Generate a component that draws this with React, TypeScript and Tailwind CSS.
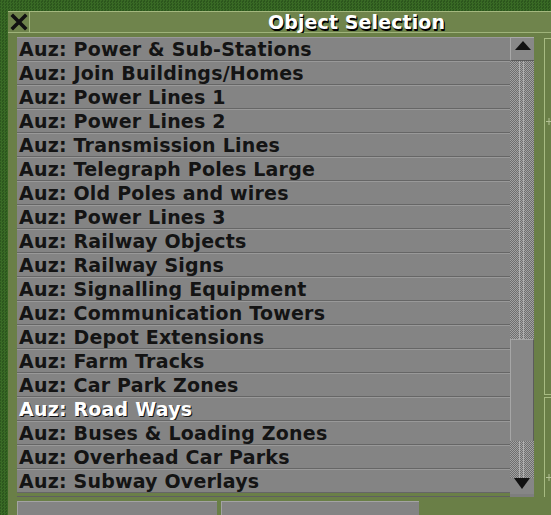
import React from 'react';

const ITEMS = [
  'Power & Sub-Stations',
  'Join Buildings/Homes',
  'Power Lines 1',
  'Power Lines 2',
  'Transmission Lines',
  'Telegraph Poles Large',
  'Old Poles and wires',
  'Power Lines 3',
  'Railway Objects',
  'Railway Signs',
  'Signalling Equipment',
  'Communication Towers',
  'Depot Extensions',
  'Farm Tracks',
  'Car Park Zones',
  'Road Ways',
  'Buses & Loading Zones',
  'Overhead Car Parks',
  'Subway Overlays',
];
const SELECTED = 'Road Ways';

const checker =
  'bg-[image:repeating-conic-gradient(#a2a2a2_0_25%,#6e6e6e_0_50%)] bg-[length:2px_2px]';

export default function App() {
  return (
    <div className="relative w-[551px] h-[515px] overflow-hidden bg-[#2c561d]">
      {/* grass specks */}
      <div className="absolute inset-0 bg-[image:repeating-conic-gradient(#3f7229_0_25%,transparent_0_50%)] bg-[length:3px_3px] opacity-70" />

      {/* the window, placed on the game canvas */}
      <div className="absolute left-[8px] top-[11px] w-[660px] h-[520px] flex flex-col font-['DejaVu_Sans',sans-serif]">
        {/* title bar */}
        <div className="flex h-[23px] bg-[#6f844c] border-t border-[#a4b87f] border-b border-b-[#9fb37a]">
          <div className="w-[22px] h-full flex items-center justify-center border-r border-[#a4b87f]">
            <svg width="18" height="18" viewBox="0 0 18 18">
              <path d="M3 3 L15 15 M15 3 L3 15" stroke="#111" strokeWidth="3.6" strokeLinecap="square" />
            </svg>
          </div>
          <div className="flex-1 pl-[238px] flex items-center">
            <span className="text-white font-bold text-[19px] leading-none tracking-[0.1px] [text-shadow:1px_1px_0_#000,1px_2px_0_#000]">
              Object Selection
            </span>
          </div>
        </div>

        {/* body */}
        <div className="flex-1 bg-[#6a7f47] pl-[9px] pt-[4px] flex flex-col">
          <div className="flex">
            {/* list */}
            <div className="flex">
              <div className="w-[493px] flex flex-col border-b border-[#5f5f5f]">
                {ITEMS.map((it) => {
                  const sel = it === SELECTED;
                  return (
                    <div
                      key={it}
                      className="h-[24px] bg-[#848484] border-t border-[#999999] border-b border-b-[#666666] flex items-center pl-[2px] overflow-hidden"
                    >
                      <span
                        className={`font-bold text-[19px] leading-none tracking-[0.2px] whitespace-nowrap ${
                          sel ? 'text-white [text-shadow:1px_1px_0_#111]' : 'text-[#141414]'
                        }`}
                      >
                        Auz: {it}
                      </span>
                    </div>
                  );
                })}
              </div>

              {/* scrollbar */}
              <div className="w-[24px] flex flex-col bg-[#7e7e7e]">
                <div className="h-[24px] bg-[#888888] border-t border-l border-[#a8a8a8] border-b border-b-[#5a5a5a] flex items-start justify-center pt-[3px]">
                  <svg width="16" height="9" viewBox="0 0 16 9">
                    <path d="M8 0 L16 9 L0 9 Z" fill="#111" />
                  </svg>
                </div>
                <Track h="h-[278px]" />
                <div className="h-[102px] bg-[#878787] border-t border-l border-[#a6a6a6] border-r border-r-[#5c5c5c]" />
                <Track h="h-[37px]" />
                <div className="h-[16px] bg-[#868686] flex justify-center">
                  <svg width="16" height="11" viewBox="0 0 16 11">
                    <path d="M0 0 L16 0 L8 11 Z" fill="#111" />
                  </svg>
                </div>
              </div>
            </div>

            {/* neighbouring panel column */}
            <div className="ml-[10px] flex flex-col gap-[2px] pt-[1px]">
              <div className="w-[80px] h-[357px] border-l border-t border-b border-[#a7bb82] relative">
                <Cross top="top-[79px]" />
              </div>
              <div className="w-[80px] h-[100px] border-l border-t border-[#a7bb82] relative">
                <Cross top="top-[76px]" />
              </div>
            </div>
          </div>

          {/* bottom buttons */}
          <div className="flex gap-[4px] mt-[4px]">
            <div className="w-[200px] h-[30px] bg-[#848484] border-t border-l border-[#a3a3a3]" />
            <div className="w-[198px] h-[30px] bg-[#848484] border-t border-l border-[#a3a3a3]" />
          </div>
        </div>
      </div>
    </div>
  );
}

function Cross({ top }: { top: string }) {
  return (
    <svg className={`absolute left-[1px] ${top}`} width="6" height="7" viewBox="0 0 6 7">
      <path d="M0 3.5 H6 M3 0 V7" stroke="#b4c296" strokeWidth="1" />
    </svg>
  );
}

function Track({ h }: { h: string }) {
  return (
    <div className={`${h} flex`}>
      <div className={`w-[9px] ${checker}`} />
      <div className="w-[1px] bg-[#b0b0b0]" />
      <div className={`w-[3px] ${checker}`} />
      <div className="w-[1px] bg-[#b0b0b0]" />
      <div className={`flex-1 ${checker}`} />
    </div>
  );
}
